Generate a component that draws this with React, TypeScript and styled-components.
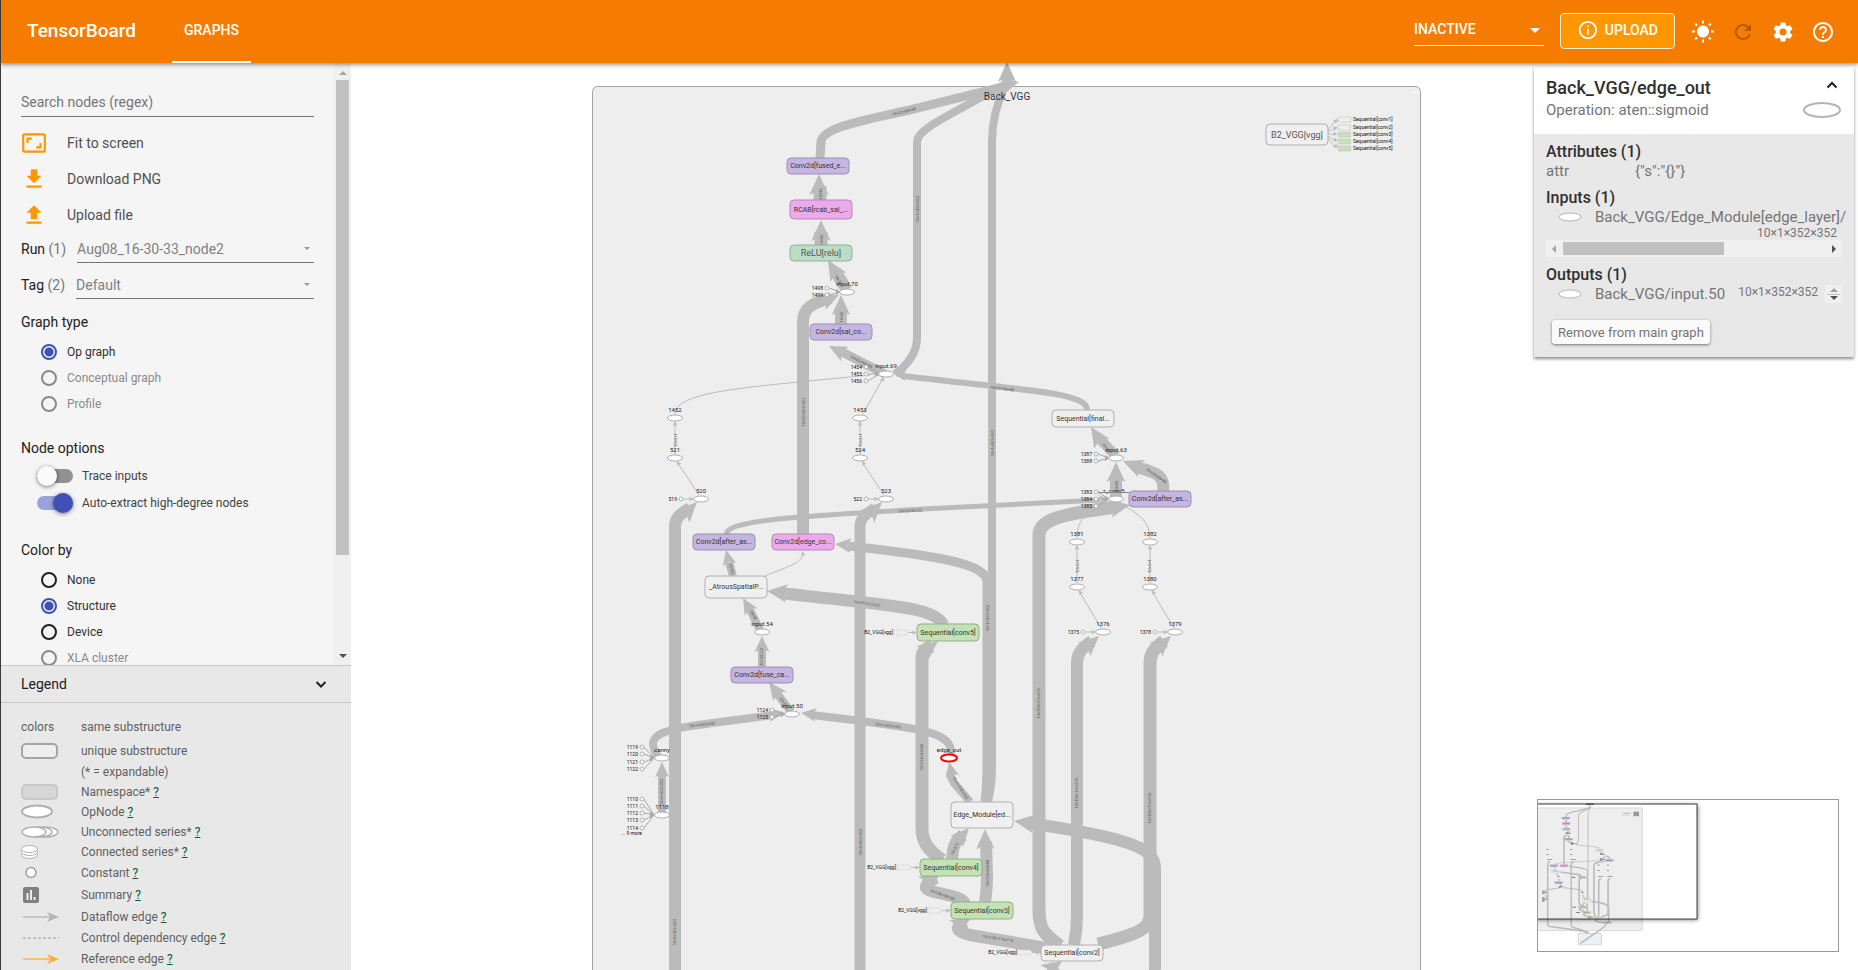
import React from 'react';
import styled, { createGlobalStyle } from 'styled-components';
import {
  MdAspectRatio,
  MdFileDownload,
  MdHelpOutline,
  MdInfoOutline,
  MdRefresh,
  MdSettings,
  MdWbSunny,
} from 'react-icons/md';

const GlobalStyle = createGlobalStyle`
  * { box-sizing: border-box; }
  body { margin: 0; font-family: Roboto, "Noto Sans", sans-serif; font-size: 14px; color: #212121; background: #fff; }
  button, input, select { font: inherit; color: inherit; }
`;

/* ---------- page frame ---------- */

const Page = styled.div`
  display: flex;
  flex-direction: column;
  height: 100vh;
  border-left: 1px solid #3a3a3a;
  overflow: hidden;
`;

const Body = styled.div`
  display: flex;
  flex: 1;
  min-height: 0;
`;

/* ---------- header ---------- */

const Header = styled.header`
  position: relative;
  z-index: 5;
  display: flex;
  align-items: center;
  height: 63px;
  flex: none;
  padding: 0 23px 0 26px;
  background: #f57c00;
  color: #fff;
  box-shadow: 0 2px 4px rgba(0, 0, 0, 0.4);
`;

const Brand = styled.h1`
  margin: 0 36px 0 0;
  padding-bottom: 2px;
  font-size: 19px;
  font-weight: 500;
  line-height: 24px;
`;

const Tabs = styled.nav`
  display: flex;
  flex: 1;
  align-self: stretch;
`;

const Tab = styled.button`
  padding: 0 12px 2px;
  border: 0;
  border-bottom: 2px solid #fff;
  background: none;
  font-weight: 500;
`;

const StatusSelect = styled.div`
  position: relative;
  display: flex;
  width: 130px;
  height: 30px;
  margin: 0 16px 2px 0;
  padding-bottom: 2px;
  border-bottom: 1px solid #fff;
  font-weight: 500;
`;

const UploadButton = styled.button`
  display: flex;
  align-items: center;
  gap: 6px;
  width: 115px;
  height: 36px;
  margin: 0 16px 2px 0;
  padding: 0 16px 2px;
  border: 1px solid #fff0d8;
  border-radius: 4px;
  background: #ff9800;
  font-weight: 500;
`;

const IconBar = styled.div`
  display: flex;
  gap: 16px;
`;

const IconButton = styled.button<{ $dim?: boolean }>`
  display: flex;
  width: 24px;
  height: 24px;
  padding: 0;
  border: 0;
  background: none;
  color: ${(p) => (p.$dim ? '#b45b00' : '#fff')};
`;

const Caret = styled.span<{ $color: string; $size: number; $dir?: 'up' | 'down' | 'left' | 'right' }>`
  width: 0;
  height: 0;
  pointer-events: none;
  border: ${(p) => p.$size}px solid transparent;
  ${(p) => {
    const side = { up: 'bottom', down: 'top', left: 'right', right: 'left' }[p.$dir ?? 'down'];
    const opposite = { up: 'top', down: 'bottom', left: 'left', right: 'right' }[p.$dir ?? 'down'];
    return `border-${side}-color: ${p.$color}; border-${opposite}-width: 0;`;
  }}
`;

const BareSelect = styled.select`
  flex: 1;
  min-width: 0;
  padding: 0;
  border: 0;
  outline: 0;
  appearance: none;
  background: none;
  option { color: #212121; }
`;

const CaretSlot = styled.span<{ $right: number }>`
  position: absolute;
  right: ${(p) => p.$right}px;
  top: 0;
  bottom: 0;
  display: flex;
  align-items: center;
  pointer-events: none;
`;

/* ---------- sidebar ---------- */

const Sidebar = styled.aside`
  display: flex;
  flex-direction: column;
  width: 350px;
  flex: none;
  background: #f5f5f5;
`;

const ControlsScroller = styled.div`
  display: flex;
  flex: 1;
  min-height: 0;
  overflow: hidden;
`;

const Controls = styled.div`
  flex: 1;
  min-width: 0;
  padding: 25px 20px 0;
`;

const SearchInput = styled.input`
  display: block;
  width: 100%;
  height: 29px;
  margin-bottom: 8px;
  padding: 0;
  border: 0;
  border-bottom: 1px solid #757575;
  outline: 0;
  background: none;
  &::placeholder { color: #757575; opacity: 1; }
`;

const ActionButton = styled.button`
  display: flex;
  align-items: center;
  gap: 20px;
  width: 100%;
  height: 36px;
  padding: 0;
  border: 0;
  background: none;
  color: #505050;
  text-align: left;
  svg { color: #ff9800; }
`;

const PickRow = styled.div`
  display: flex;
  align-items: flex-end;
  gap: 11px;
  height: 30px;
  margin-bottom: 6px;
  line-height: 28px;
  color: #212121;
`;

const Count = styled.span`
  color: #757575;
`;

const PickBox = styled.div`
  position: relative;
  display: flex;
  flex: 1;
  height: 28px;
  border-bottom: 1px solid #757575;
  color: #808080;
`;

const SectionTitle = styled.h2<{ $gap: number }>`
  margin: ${(p) => p.$gap}px 0 0;
  font-size: 14px;
  font-weight: 400;
  line-height: 20px;
`;

const OptionList = styled.div`
  padding: 7px 0 0 20px;
`;

const OptionLabel = styled.label<{ $off?: boolean }>`
  display: flex;
  align-items: center;
  gap: 10px;
  height: 26px;
  font-size: 12px;
  color: ${(p) => (p.$off ? '#8a8a8a' : '#303030')};
`;

const Radio = styled.input`
  width: 16px;
  height: 16px;
  margin: 0;
  appearance: none;
  border: 2px solid #212121;
  border-radius: 50%;
  &:disabled { border-color: #8a8a8a; }
  &:checked {
    border-color: #3f51b5;
    background: radial-gradient(circle, #3f51b5 4px, transparent 5px);
  }
`;

const SwitchList = styled.div`
  padding: 4px 0 0 16px;
`;

const SwitchLabel = styled.label`
  display: flex;
  align-items: center;
  gap: 9px;
  height: 27px;
  font-size: 12px;
  color: #424242;
`;

const Switch = styled.input`
  position: relative;
  width: 36px;
  height: 14px;
  margin: 0;
  appearance: none;
  border-radius: 7px;
  background: #919191;
  &::before {
    content: '';
    position: absolute;
    top: -3px;
    left: 0;
    width: 20px;
    height: 20px;
    border-radius: 50%;
    background: #fafafa;
    box-shadow: 0 1px 4px rgba(0, 0, 0, 0.5);
  }
  &:checked { background: #9aa4da; }
  &:checked::before { left: 16px; background: #3f51b5; }
`;

const VerticalTrack = styled.div`
  display: flex;
  flex-direction: column;
  align-items: center;
  width: 17px;
  padding: 8px 0 7px;
  background: #f0f0f0;
`;

const VerticalThumb = styled.div`
  width: 13px;
  height: 475px;
  margin: 5px 0 auto;
  background: #c1c1c1;
`;

const Legend = styled.section`
  flex: none;
  background: #e8e8e8;
`;

const LegendHeader = styled.button`
  display: flex;
  align-items: center;
  justify-content: space-between;
  width: 100%;
  height: 38px;
  padding: 0 24px 0 20px;
  border: 0;
  border-top: 1px solid #c8c8c8;
  border-bottom: 1px solid #c8c8c8;
  background: none;
`;

const LegendList = styled.ul`
  margin: 0;
  padding: 11px 20px 1px;
  list-style: none;
  font-size: 12px;
  color: #5f5f5f;
`;

const LegendRow = styled.li<{ $h: number }>`
  display: flex;
  align-items: center;
  height: ${(p) => p.$h}px;
`;

const LegendKey = styled.span`
  display: flex;
  align-items: center;
  width: 60px;
  flex: none;
`;

const HelpLink = styled.a`
  margin-left: 3px;
  color: #0b5a2a;
`;

/* ---------- canvas ---------- */

const Canvas = styled.main`
  position: relative;
  flex: 1;
  min-width: 0;
  overflow: hidden;
  background: #fff;
`;

const GraphSvg = styled.svg`
  display: block;
  width: 100%;
  height: 100%;
`;

const Minimap = styled.div`
  position: absolute;
  right: 19px;
  bottom: 18px;
  width: 302px;
  height: 153px;
  border: 1px solid #999;
  background: #fff;
`;

const InfoPanel = styled.section`
  position: absolute;
  top: 4px;
  right: 4px;
  width: 320px;
  background: #e8e8e8;
  box-shadow: 0 2px 3px rgba(0, 0, 0, 0.45);
  font-size: 15px;
  color: #757575;
`;

const InfoHead = styled.div`
  display: flex;
  justify-content: space-between;
  height: 67px;
  padding: 9px 12px 0;
  background: #fff;
`;

const InfoTitle = styled.h2`
  margin: 0;
  font-size: 18px;
  font-weight: 500;
  line-height: 24px;
  color: #303030;
`;

const InfoSub = styled.div`
  font-size: 15px;
  line-height: 20px;
`;

const InfoIcons = styled.div`
  display: flex;
  flex-direction: column;
  align-items: flex-end;
  gap: 10px;
`;

const CollapseButton = styled.button`
  display: flex;
  margin: 3px 4px 0;
  padding: 0;
  border: 0;
  background: none;
`;

const InfoBody = styled.div`
  padding: 8px 12px 13px;
`;

const InfoHeading = styled.h3`
  margin: 0;
  font-size: 16px;
  font-weight: 500;
  line-height: 20px;
  color: #303030;
`;

const AttrRow = styled.div`
  display: flex;
  height: 26px;
  line-height: 18px;
`;

const AttrName = styled.span`
  width: 89px;
`;

const IoRow = styled.div`
  display: flex;
  align-items: center;
  height: 18px;
  gap: 13px;
  padding-left: 12px;
  white-space: nowrap;
  svg { flex: none; }
`;

const Shape = styled.div`
  padding-right: 5px;
  font-size: 12px;
  line-height: 14px;
  text-align: right;
`;

const InlineShape = styled.span`
  flex: 1;
  font-size: 12px;
  line-height: 14px;
  padding-bottom: 4px;
`;

const HorizontalTrack = styled.div`
  display: flex;
  align-items: center;
  height: 17px;
  margin-bottom: 8px;
  padding: 0 6px;
  background: #f0f0f0;
`;

const HorizontalThumb = styled.div`
  width: 161px;
  height: 13px;
  margin: 0 auto 0 7px;
  background: #c1c1c1;
`;

const StepTrack = styled.span`
  display: flex;
  flex-direction: column;
  align-items: center;
  justify-content: space-between;
  flex: none;
  width: 17px;
  height: 18px;
  margin-left: -9px;
  padding: 3px 0;
  background: #f0f0f0;
`;

const StepLine = styled.span`
  width: 13px;
  height: 1px;
  background: #c1c1c1;
`;

const RemoveButton = styled.button`
  display: block;
  height: 24px;
  margin: 17px 0 0 6px;
  padding: 0 6px;
  border: 0;
  border-radius: 3px;
  background: #fafafa;
  box-shadow: 0 1px 3px rgba(0, 0, 0, 0.5);
  font-size: 13px;
`;

/* ---------- graph data ---------- */

const EDGE = '#bbb';

type Head = [x: number, y: number, angle: number, size: number];
interface Edge {
  d: string;
  w: number;
  head?: Head;
}

const edges: Edge[] = [
  { d: 'M820 158 L821 142 C822 128 860 121 905 111 L1006 86', w: 9, head: [1019, 82, -14, 17] },
  { d: 'M895 374 C910 363 917 352 917 338 L917 142 C917 130 940 120 1004 85', w: 8 },
  { d: 'M988 802 C992 785 992 775 992 760 L992 142 C992 115 1000 96 1006 84', w: 8 },
  { d: 'M1007 86 L1007 76', w: 10, head: [1007, 62, -90, 20] },
  { d: 'M985 802 C987 785 987 775 987 760 L987 582 C987 564 940 556 848 546', w: 9, head: [835, 544, 186, 16] },
  { d: 'M820 200 L820 186', w: 13, head: [819, 174, -90, 21] },
  { d: 'M821 245 L821 232', w: 13, head: [821, 220, -90, 21] },
  { d: 'M847 290 L835 271', w: 12, head: [828, 260, -121, 20] },
  { d: 'M841 324 L841 308', w: 12, head: [841, 295, -90, 20] },
  { d: 'M803 535 L803 322 C803 308 812 303 831 298', w: 12, head: [839, 295, -23, 18] },
  { d: 'M885 374 L842 352', w: 9, head: [829, 346, 207, 18] },
  { d: 'M1087 410 C1088 392 1020 390 903 376', w: 6, head: [894, 374, 187, 12] },
  { d: 'M726 535 C726 520 790 517 923 509 L1100 500', w: 5, head: [1109, 499, -4, 10] },
  { d: 'M675 1014 L675 527 C675 518 679 515 690 508', w: 12, head: [697, 502, -45, 20] },
  { d: 'M860 1014 L860 527 C860 518 865 515 875 508', w: 11, head: [882, 502, -45, 20] },
  { d: 'M733 576 L729 562', w: 8, head: [726, 550, -104, 15] },
  { d: 'M943 625 C936 606 880 605 781 593', w: 12, head: [767, 591, 187, 20] },
  { d: 'M760 630 L749 608', w: 8, head: [743, 598, -120, 16] },
  { d: 'M762 667 L762 648', w: 8, head: [762, 636, -90, 16] },
  { d: 'M791 712 L776 692', w: 8, head: [769, 682, -127, 18] },
  { d: 'M658 757 C640 728 670 729 773 715', w: 8, head: [784, 713, -7, 15] },
  { d: 'M951 754 C953 730 915 728 812 715', w: 8, head: [801, 713, 187, 15] },
  { d: 'M662 812 L662 774', w: 8, head: [662, 762, -90, 15] },
  { d: 'M970 802 C958 786 952 785 950 772', w: 8, head: [949, 762, -103, 15] },
  { d: 'M952 859 C953 845 956 840 963 835', w: 12, head: [969, 828, -48, 18] },
  { d: 'M985 902 C987 890 987 885 987 875 L986 842', w: 12, head: [985, 829, -91, 20] },
  { d: 'M965 904 C962 894 930 894 926 888 C925 883 932 880 936 878', w: 12, head: [940, 875, -28, 20] },
  { d: 'M942 860 C928 850 922 842 922 828 L922 657 C922 652 926 648 932 646', w: 13, head: [938, 641, -38, 20] },
  { d: 'M1046 948 L970 935 C954 931 955 926 966 922', w: 12, head: [971, 918, -30, 20] },
  { d: 'M1060 946 C1045 935 1039 930 1039 910 L1039 535 C1039 520 1060 514 1117 507', w: 13, head: [1130, 505, -10, 20] },
  { d: 'M1074 945 C1077 930 1077 925 1077 915 L1077 663 C1077 653 1082 648 1092 641', w: 12, head: [1099, 636, -42, 20] },
  { d: 'M1098 944 C1140 934 1150 928 1150 915 L1150 663 C1150 653 1155 648 1164 641', w: 13, head: [1171, 636, -42, 20] },
  { d: 'M1150 988 C1155 980 1155 975 1155 965 L1155 868 C1155 848 1130 838 1028 823', w: 12, head: [1014, 821, 188, 20] },
  { d: 'M1120 990 C1060 985 1046 976 1056 966', w: 12, head: [1062, 961, -35, 20] },
  { d: 'M1116 456 L1098 437', w: 10, head: [1091, 427, -123, 20] },
  { d: 'M1116 498 L1116 476', w: 12, head: [1116, 462, -90, 20] },
  { d: 'M1163 492 C1166 473 1152 472 1136 467', w: 12, head: [1123, 461, 202, 20] },
  { d: 'M675 1014 C680 1028 880 1030 1000 1070', w: 12 },
  { d: 'M860 1014 C862 1028 940 1040 1000 1070', w: 11 },
  { d: 'M1140 995 C1130 1030 1060 1060 930 1155', w: 12 },
];

const thinEdges: Edge[] = [
  { d: 'M675 414 C677 391 740 388 870 375', w: 1 },
  { d: 'M863 414 L883 378', w: 1, head: [884, 377, -61, 5] },
  { d: 'M675 454 L675 422', w: 1, head: [675, 421, -90, 5] },
  { d: 'M860 454 L860 422', w: 1, head: [860, 421, -90, 5] },
  { d: 'M699 495 L677 462', w: 1, head: [677, 461, -123, 5] },
  { d: 'M884 495 L862 462', w: 1, head: [862, 461, -123, 5] },
  { d: 'M683 499 L692 499', w: 1, head: [694, 499, 0, 5] },
  { d: 'M868 499 L877 499', w: 1, head: [879, 499, 0, 5] },
  { d: 'M765 576 C785 567 803 564 803 553', w: 1, head: [803, 551, -90, 5] },
  { d: 'M1077 538 C1077 515 1090 512 1118 503', w: 1 },
  { d: 'M1150 538 C1150 520 1135 512 1120 503', w: 1 },
  { d: 'M1077 583 L1077 546', w: 1, head: [1077, 545, -90, 5] },
  { d: 'M1150 583 L1150 546', w: 1, head: [1150, 545, -90, 5] },
  { d: 'M1101 628 L1079 591', w: 1, head: [1079, 590, -120, 5] },
  { d: 'M1174 628 L1152 591', w: 1, head: [1152, 590, -120, 5] },
  { d: 'M1086 632 L1094 632', w: 1, head: [1096, 632, 0, 5] },
  { d: 'M1158 632 L1166 632', w: 1, head: [1168, 632, 0, 5] },
];

interface BoxNode {
  x: number;
  y: number;
  h: number;
  label: string;
  fill: string;
  stroke: string;
  big?: boolean;
}

const PURPLE = { fill: '#c5b5e1', stroke: '#9c8fb5' };
const PINK = { fill: '#ebaaea', stroke: '#b986b9' };
const MINT = { fill: '#bbddc6', stroke: '#93b09c' };
const GREEN = { fill: '#c5e2b5', stroke: '#94ad86' };
const PLAIN = { fill: '#f0f0f0', stroke: '#b0b0b0' };

const boxes: BoxNode[] = [
  { x: 787, y: 158, h: 16, label: 'Conv2d[fused_e...', ...PURPLE },
  { x: 790, y: 200, h: 19, label: 'RCAB[rcab_sal_...', ...PINK },
  { x: 790, y: 245, h: 16, label: 'ReLU[relu]', big: true, ...MINT },
  { x: 810, y: 324, h: 16, label: 'Conv2d[sal_co...', ...PURPLE },
  { x: 693, y: 534, h: 16, label: 'Conv2d[after_as...', ...PURPLE },
  { x: 772, y: 534, h: 16, label: 'Conv2d[edge_co...', ...PINK },
  { x: 705, y: 576, h: 22, label: '_AtrousSpatialP...', ...PLAIN },
  { x: 917, y: 624, h: 17, label: 'Sequential[conv5]', ...GREEN },
  { x: 731, y: 667, h: 16, label: 'Conv2d[fuse_ca...', ...PURPLE },
  { x: 951, y: 802, h: 26, label: 'Edge_Module[ed...', ...PLAIN },
  { x: 920, y: 859, h: 17, label: 'Sequential[conv4]', ...GREEN },
  { x: 951, y: 902, h: 17, label: 'Sequential[conv3]', ...GREEN },
  { x: 1041, y: 945, h: 16, label: 'Sequential[conv2]', ...PLAIN },
  { x: 1052, y: 410, h: 17, label: 'Sequential[final...', ...PLAIN },
  { x: 1129, y: 491, h: 16, label: 'Conv2d[after_as...', ...PURPLE },
  { x: 1266, y: 124, h: 21, label: 'B2_VGG[vgg]', big: true, ...PLAIN },
];

interface OpNode {
  x: number;
  y: number;
  label: string;
  selected?: boolean;
}

const ops: OpNode[] = [
  { x: 847, y: 292, label: 'input.70' },
  { x: 886, y: 374, label: 'input.69' },
  { x: 675, y: 418, label: '1452' },
  { x: 675, y: 458, label: '521' },
  { x: 701, y: 499, label: '520' },
  { x: 860, y: 418, label: '1453' },
  { x: 860, y: 458, label: '524' },
  { x: 886, y: 499, label: '523' },
  { x: 762, y: 632, label: 'input.54' },
  { x: 792, y: 714, label: 'input.50' },
  { x: 662, y: 758, label: 'canny' },
  { x: 662, y: 815, label: '1118' },
  { x: 949, y: 758, label: 'edge_out', selected: true },
  { x: 1116, y: 458, label: 'input.63' },
  { x: 1116, y: 499, label: 'z_conv5...' },
  { x: 1077, y: 542, label: '1381' },
  { x: 1077, y: 587, label: '1377' },
  { x: 1103, y: 632, label: '1376' },
  { x: 1150, y: 542, label: '1382' },
  { x: 1150, y: 587, label: '1380' },
  { x: 1175, y: 632, label: '1379' },
];

interface Constant {
  x: number;
  y: number;
  label: string;
  to?: [number, number];
}

const constants: Constant[] = [
  { x: 827, y: 288, label: '1498', to: [840, 292] },
  { x: 827, y: 295, label: '1499', to: [840, 292] },
  { x: 866, y: 367, label: '1454', to: [879, 374] },
  { x: 866, y: 374, label: '1455', to: [879, 374] },
  { x: 866, y: 381, label: '1456', to: [879, 374] },
  { x: 681, y: 499, label: '519' },
  { x: 866, y: 499, label: '522' },
  { x: 772, y: 710, label: '1124', to: [785, 714] },
  { x: 772, y: 717, label: '1125', to: [785, 714] },
  { x: 642, y: 747, label: '1119', to: [654, 758] },
  { x: 642, y: 754, label: '1120', to: [654, 758] },
  { x: 642, y: 762, label: '1121', to: [654, 758] },
  { x: 642, y: 769, label: '1122', to: [654, 758] },
  { x: 642, y: 799, label: '1110', to: [654, 815] },
  { x: 642, y: 806, label: '1111', to: [654, 815] },
  { x: 642, y: 813, label: '1112', to: [654, 815] },
  { x: 642, y: 820, label: '1113', to: [654, 815] },
  { x: 642, y: 828, label: '1114', to: [654, 815] },
  { x: 1096, y: 454, label: '1387', to: [1109, 458] },
  { x: 1096, y: 461, label: '1388', to: [1109, 458] },
  { x: 1096, y: 492, label: '1383', to: [1109, 499] },
  { x: 1096, y: 499, label: '1384', to: [1109, 499] },
  { x: 1096, y: 506, label: '1385', to: [1109, 499] },
  { x: 1083, y: 632, label: '1375' },
  { x: 1155, y: 632, label: '1378' },
];

const refInputs: [number, number][] = [
  [894, 632],
  [897, 867],
  [928, 910],
  [1018, 952],
];

const refOutputs: [number, string, string][] = [
  [119, 'Sequential[conv1]', '#eee'],
  [127, 'Sequential[conv2]', '#eee'],
  [134, 'Sequential[conv3]', '#c5e2b5'],
  [141, 'Sequential[conv4]', '#c5e2b5'],
  [148, 'Sequential[conv5]', '#c5e2b5'],
];

const shapeLabels: [number, number, number, string][] = [
  [904, 112, -14, '10×32×88×88'],
  [918, 209, -90, '10×1×352×352'],
  [804, 412, -90, '10×32×352×352'],
  [993, 443, -90, '10×1×352×352'],
  [988, 618, -90, '10×1×352×352'],
  [821, 194, -90, '10×32'],
  [822, 240, -90, '10×32'],
  [838, 280, 59, '10×32'],
  [842, 317, -90, '10×32'],
  [861, 362, 27, '10×32×88×88'],
  [1002, 389, 7, '10×32×88×88'],
  [910, 511, -3, '10×32×22×22'],
  [676, 440, -90, '10×2×1'],
  [861, 440, -90, '10×2×1'],
  [702, 725, -7, '10×1×352×352'],
  [888, 726, 7, '10×1×352×352'],
  [662, 792, -90, '10×1×352×352'],
  [922, 757, -90, '10×256×44×44'],
  [960, 788, 57, '10×1×352×352'],
  [955, 849, -65, '10×512'],
  [988, 873, -90, '10×256×88×88'],
  [942, 895, 20, '10×256×88×88'],
  [998, 939, 8, '10×128×176×176'],
  [675, 932, -90, '10×3×352×352'],
  [861, 842, -90, '10×3×352×352'],
  [1039, 703, -90, '10×128×176×176'],
  [1077, 793, -90, '10×128×176×176'],
  [1150, 808, -90, '10×128×176×176'],
  [1117, 486, -90, '10×32'],
  [1156, 476, 35, '10×32×88×88'],
  [1106, 448, 50, '10×32'],
  [1078, 566, -90, '10×2×1'],
  [1150, 566, -90, '10×2×1'],
  [732, 569, -104, '10×32'],
  [753, 615, 60, '10×32'],
  [762, 657, -90, '10×32×22'],
  [783, 702, 53, '10×32'],
  [867, 604, 8, '10×512×22×22'],
];

function ArrowHead({ head }: { head: Head }) {
  const [x, y, angle, s] = head;
  return (
    <path
      d={`M0 0 L${-s} ${-s * 0.46} L${-s * 0.78} 0 L${-s} ${s * 0.46} Z`}
      transform={`translate(${x} ${y}) rotate(${angle})`}
      fill={EDGE}
    />
  );
}

function Edges({ list }: { list: Edge[] }) {
  return (
    <g fill="none" stroke={EDGE}>
      {list.map((e, i) => (
        <path key={i} d={e.d} strokeWidth={e.w} />
      ))}
      <g stroke="none">{list.map((e, i) => e.head && <ArrowHead key={i} head={e.head} />)}</g>
    </g>
  );
}

function Graph() {
  return (
    <g fontFamily="Roboto, sans-serif">
      <rect x="592.5" y="86.5" width="828" height="966" rx="5" fill="#eee" stroke="#a3a3a3" />
      <path d="M1412 92.5h5" stroke="#fff" />
      <Edges list={edges} />
      <Edges list={thinEdges} />
      <g fontSize="4" fill="#555" textAnchor="middle">
        {shapeLabels.map(([x, y, a, t], i) => (
          <text key={i} transform={`translate(${x} ${y}) rotate(${a})`} y="1">
            {t}
          </text>
        ))}
      </g>
      {boxes.map((b, i) => (
        <g key={i}>
          <rect x={b.x} y={b.y} width="62" height={b.h} rx="4" fill={b.fill} stroke={b.stroke} />
          <text
            x={b.x + 31}
            y={b.y + b.h / 2 + (b.big ? 3 : 2)}
            fontSize={b.big ? 9 : 7}
            fill={b.big ? '#555' : '#333'}
            textAnchor="middle"
          >
            {b.label}
          </text>
        </g>
      ))}
      {constants.map((c, i) => (
        <g key={i}>
          {c.to && <path d={`M${c.x + 2} ${c.y}L${c.to[0]} ${c.to[1]}`} stroke="#aaa" />}
          {c.to && <path d={`M${c.to[0]} ${c.to[1]}l-4 -3v6z`} fill="#aaa" />}
          <circle cx={c.x} cy={c.y} r="2" fill="#fff" stroke="#b0b0b0" />
          <text x={c.x - 4} y={c.y + 2} fontSize="5" fill="#111" textAnchor="end">
            {c.label}
          </text>
        </g>
      ))}
      <text x="642" y="835" fontSize="5" fill="#111" textAnchor="end">
        ... 9 more
      </text>
      {ops.map((o, i) => (
        <g key={i}>
          <ellipse
            cx={o.x}
            cy={o.y}
            rx={o.selected ? 8 : 7.5}
            ry={o.selected ? 3.5 : 3}
            fill="#fff"
            stroke={o.selected ? '#f00' : '#b0b0b0'}
            strokeWidth={o.selected ? 2 : 1}
          />
          <text x={o.x} y={o.y - 6} fontSize="6" fill="#222" textAnchor="middle">
            {o.label}
          </text>
        </g>
      ))}
      <path d="M1098 492.500h31" stroke="#888" />
      {refInputs.map(([x, y], i) => (
        <g key={i}>
          <text x={x - 1} y={y + 2} fontSize="5" fill="#111" textAnchor="end">
            B2_VGG[vgg]
          </text>
          <rect x={x} y={y - 2} width="13" height="5" fill="#eee" stroke="#ccc" strokeDasharray="1 1" />
          <path d={`M${x + 14} ${y + 0.5}h6`} stroke={EDGE} />
          <ArrowHead head={[x + 23, y + 0.5, 0, 5]} />
        </g>
      ))}
      {refOutputs.map(([y, label, fill], i) => (
        <g key={i}>
          <path d={`M1328 ${130 + i * 2}L1336 ${y + 0.5}`} stroke={EDGE} />
          <ArrowHead head={[1338, y, (i - 2) * 22, 5]} />
          <rect x="1338.5" y={y - 2} width="12" height="5" fill={fill} stroke="#bbb" strokeDasharray="1 1" />
          <text x="1353" y={y + 2} fontSize="5" fill="#111">
            {label}
          </text>
        </g>
      ))}
      <text x="1007" y="100" fontSize="10" fill="#333" textAnchor="middle">
        Back_VGG
      </text>
    </g>
  );
}

/* The overview repeats the graph without its texts; each label becomes a short bar. */
function GraphOverview() {
  return (
    <g>
      <rect x="592" y="86" width="828" height="966" rx="5" fill="#eee" stroke="#d0d0d0" strokeWidth="6" />
      <rect x="915" y="1075" width="182" height="88" rx="6" fill="#ecf1f5" stroke="#d5d8da" strokeWidth="8" />
      <Edges list={edges} />
      {boxes.map((b, i) => (
        <g key={i}>
          <rect x={b.x} y={b.y} width="62" height={b.h} fill={b.fill} stroke={b.stroke} strokeWidth="2" />
          <rect x={b.x + 8} y={b.y + 5} width="46" height="6" fill="#666" opacity="0.5" />
        </g>
      ))}
      {[...ops, ...constants].map((o, i) => (
        <g key={i}>
          <ellipse cx={o.x} cy={o.y} rx="7" ry="3" fill="#fff" />
          <rect x={o.x - 10} y={o.y - 9} width="18" height="5" fill="#666" />
        </g>
      ))}
      {refInputs.map(([x, y], i) => (
        <rect key={i} x={x - 28} y={y - 3} width="28" height="6" fill="#555" />
      ))}
      <rect x="1350" y="115" width="44" height="36" fill="#999" />
      <rect x="975" y="50" width="62" height="14" fill="#777c9a" />
      <rect x="1114" y="983" width="62" height="12" fill="#aaa" />
    </g>
  );
}

/* ---------- small icons ---------- */

function Chevron({ up }: { up?: boolean }) {
  return (
    <svg width="12" height="12" viewBox="0 0 12 12" fill="none" stroke="#212121" strokeWidth="2" aria-hidden="true">
      <path d={up ? 'M1.5 8.5L6 4l4.5 4.5' : 'M1.5 4L6 8.5L10.5 4'} />
    </svg>
  );
}

function OpIcon({ width, height, stroke = 1 }: { width: number; height: number; stroke?: number }) {
  return (
    <svg width={width} height={height} aria-hidden="true">
      <ellipse
        cx={width / 2}
        cy={height / 2}
        rx={width / 2 - stroke}
        ry={height / 2 - stroke}
        fill="#fff"
        stroke="#b5b5b5"
        strokeWidth={stroke}
      />
    </svg>
  );
}

function UploadGlyph() {
  return (
    <svg width="26" height="26" viewBox="0 0 24 24" fill="currentColor" aria-hidden="true">
      <path d="M9 16h6v-6h4l-7-7-7 7h4zM5 18h14v2H5z" />
    </svg>
  );
}

const legendIcons: Record<string, React.ReactNode> = {
  unique: <rect x="1" y="1" width="35" height="14" rx="4" fill="#eee" stroke="#a5a5a5" strokeWidth="2" />,
  namespace: <rect x="1" y="1" width="35" height="14" rx="4" fill="#d6d6d6" stroke="#c8c8c8" strokeWidth="2" />,
  op: <ellipse cx="16" cy="7.5" rx="15" ry="6" fill="#fff" stroke="#b0b0b0" strokeWidth="2" />,
  unconnected: (
    <g fill="#fff" stroke="#b0b0b0" strokeWidth="1.5">
      <ellipse cx="25" cy="8" rx="12" ry="5" />
      <ellipse cx="19" cy="8" rx="12" ry="5" />
      <ellipse cx="13" cy="8" rx="12" ry="5" />
    </g>
  ),
  connected: (
    <g fill="#fff" stroke="#b0b0b0">
      <ellipse cx="8.5" cy="11" rx="8" ry="3.5" />
      <ellipse cx="8.5" cy="8" rx="8" ry="3.5" />
      <ellipse cx="8.5" cy="5" rx="8" ry="3.5" />
    </g>
  ),
  constant: <circle cx="10" cy="7.5" r="5" fill="#fff" stroke="#a0a0a0" strokeWidth="1.5" />,
  summary: (
    <g>
      <rect x="2" width="16" height="16" rx="2" fill="#808080" />
      <path d="M6.500 6v7M10 3v10M13.500 10v3" stroke="#eee" strokeWidth="2" />
    </g>
  ),
  dataflow: (
    <g>
      <path d="M2 8h28" stroke="#bbb" strokeWidth="1.500" />
      <path d="M38 8l-12 -5l3 5l-3 5z" fill="#b5b5b5" />
    </g>
  ),
  control: <path d="M2 8h36" stroke="#b5b5b5" strokeWidth="1.500" strokeDasharray="3 2" />,
  reference: (
    <g>
      <path d="M2 8h28" stroke="#ffb74d" strokeWidth="1.500" />
      <path d="M38 8l-12 -5l3 5l-3 5z" fill="#ffb03a" />
    </g>
  ),
};

const legendRows: { h: number; text: string; icon?: string; help?: boolean }[] = [
  { h: 22, text: 'unique substructure', icon: 'unique' },
  { h: 20, text: '(* = expandable)' },
  { h: 20, text: 'Namespace*', icon: 'namespace', help: true },
  { h: 20, text: 'OpNode', icon: 'op', help: true },
  { h: 20, text: 'Unconnected series*', icon: 'unconnected', help: true },
  { h: 20, text: 'Connected series*', icon: 'connected', help: true },
  { h: 22, text: 'Constant', icon: 'constant', help: true },
  { h: 22, text: 'Summary', icon: 'summary', help: true },
  { h: 21, text: 'Dataflow edge', icon: 'dataflow', help: true },
  { h: 21, text: 'Control dependency edge', icon: 'control', help: true },
  { h: 21, text: 'Reference edge', icon: 'reference', help: true },
];

/* ---------- composed parts ---------- */

function Picker({ id, label, count, value }: { id: string; label: string; count: number; value: string }) {
  return (
    <PickRow>
      <label htmlFor={id}>
        {label} <Count>({count})</Count>
      </label>
      <PickBox>
        <BareSelect id={id}>
          <option>{value}</option>
        </BareSelect>
        <CaretSlot $right={4}>
          <Caret $size={3} $color="#9a9a9a" />
        </CaretSlot>
      </PickBox>
    </PickRow>
  );
}

function RadioOptions({ name, options, selected, disabled }: { name: string; options: string[]; selected: string; disabled: string[] }) {
  return (
    <OptionList>
      {options.map((o) => (
        <OptionLabel key={o} $off={disabled.includes(o)}>
          <Radio type="radio" name={name} defaultChecked={o === selected} disabled={disabled.includes(o)} />
          {o}
        </OptionLabel>
      ))}
    </OptionList>
  );
}

export default function App() {
  return (
    <Page>
      <GlobalStyle />
      <Header>
        <Brand>TensorBoard</Brand>
        <Tabs>
          <Tab>GRAPHS</Tab>
        </Tabs>
        <StatusSelect>
          <BareSelect aria-label="Inactive dashboards">
            <option>INACTIVE</option>
          </BareSelect>
          <CaretSlot $right={4}>
            <Caret $size={5} $color="#fff" />
          </CaretSlot>
        </StatusSelect>
        <UploadButton>
          <MdInfoOutline size={24} />
          UPLOAD
        </UploadButton>
        <IconBar>
          <IconButton aria-label="Theme">
            <MdWbSunny size={24} />
          </IconButton>
          <IconButton aria-label="Reload" $dim>
            <MdRefresh size={24} />
          </IconButton>
          <IconButton aria-label="Settings">
            <MdSettings size={24} />
          </IconButton>
          <IconButton aria-label="Help">
            <MdHelpOutline size={24} />
          </IconButton>
        </IconBar>
      </Header>
      <Body>
        <Sidebar>
          <ControlsScroller>
            <Controls>
              <SearchInput type="text" aria-label="Search nodes" placeholder="Search nodes (regex)" />
              <ActionButton>
                <MdAspectRatio size={26} />
                Fit to screen
              </ActionButton>
              <ActionButton>
                <MdFileDownload size={26} />
                Download PNG
              </ActionButton>
              <ActionButton>
                <UploadGlyph />
                Upload file
              </ActionButton>
              <Picker id="run" label="Run" count={1} value="Aug08_16-30-33_node2" />
              <Picker id="tag" label="Tag" count={2} value="Default" />
              <SectionTitle $gap={13}>Graph type</SectionTitle>
              <RadioOptions
                name="graph-type"
                options={['Op graph', 'Conceptual graph', 'Profile']}
                selected="Op graph"
                disabled={['Conceptual graph', 'Profile']}
              />
              <SectionTitle $gap={21}>Node options</SectionTitle>
              <SwitchList>
                <SwitchLabel>
                  <Switch type="checkbox" />
                  Trace inputs
                </SwitchLabel>
                <SwitchLabel>
                  <Switch type="checkbox" defaultChecked />
                  Auto-extract high-degree nodes
                </SwitchLabel>
              </SwitchList>
              <SectionTitle $gap={24}>Color by</SectionTitle>
              <RadioOptions
                name="color-by"
                options={['None', 'Structure', 'Device', 'XLA cluster']}
                selected="Structure"
                disabled={['XLA cluster']}
              />
            </Controls>
            <VerticalTrack>
              <Caret $size={4} $color="#a3a3a3" $dir="up" />
              <VerticalThumb />
              <Caret $size={4} $color="#505050" />
            </VerticalTrack>
          </ControlsScroller>
          <Legend>
            <LegendHeader>
              Legend
              <Chevron />
            </LegendHeader>
            <LegendList>
              <LegendRow $h={26}>
                <LegendKey>colors</LegendKey>
                same substructure
              </LegendRow>
              {legendRows.map((row) => (
                <LegendRow key={row.text} $h={row.h}>
                  <LegendKey>
                    {row.icon && (
                      <svg width="40" height="16" aria-hidden="true">
                        {legendIcons[row.icon]}
                      </svg>
                    )}
                  </LegendKey>
                  {row.text}
                  {row.help && <HelpLink href="#help">?</HelpLink>}
                </LegendRow>
              ))}
            </LegendList>
          </Legend>
        </Sidebar>
        <Canvas>
          <GraphSvg viewBox="351 63 1507 907" preserveAspectRatio="xMinYMin meet">
            <Graph />
          </GraphSvg>
          <InfoPanel>
            <InfoHead>
              <div>
                <InfoTitle>Back_VGG/edge_out</InfoTitle>
                <InfoSub>Operation: aten::sigmoid</InfoSub>
              </div>
              <InfoIcons>
                <CollapseButton aria-label="Collapse">
                  <Chevron up />
                </CollapseButton>
                <OpIcon width={40} height={18} stroke={2} />
              </InfoIcons>
            </InfoHead>
            <InfoBody>
              <InfoHeading>Attributes (1)</InfoHeading>
              <AttrRow>
                <AttrName>attr</AttrName>
                <span>{'{"s":"{}"}'}</span>
              </AttrRow>
              <InfoHeading>Inputs (1)</InfoHeading>
              <IoRow>
                <OpIcon width={24} height={10} />
                Back_VGG/Edge_Module[edge_layer]/
              </IoRow>
              <Shape>10×1×352×352</Shape>
              <HorizontalTrack>
                <Caret $size={4} $color="#a3a3a3" $dir="left" />
                <HorizontalThumb />
                <Caret $size={4} $color="#505050" $dir="right" />
              </HorizontalTrack>
              <InfoHeading>Outputs (1)</InfoHeading>
              <IoRow>
                <OpIcon width={24} height={10} />
                Back_VGG/input.50
                <InlineShape>10×1×352×352</InlineShape>
                <StepTrack>
                  <Caret $size={4} $color="#a3a3a3" $dir="up" />
                  <StepLine />
                  <Caret $size={4} $color="#505050" />
                </StepTrack>
              </IoRow>
              <RemoveButton>Remove from main graph</RemoveButton>
            </InfoBody>
          </InfoPanel>
          <Minimap>
            <GraphSvg viewBox="1538 800 300 151">
              <defs>
                <filter id="lens-shadow" x="-10%" y="-10%" width="120%" height="120%">
                  <feDropShadow dx="1" dy="1" stdDeviation="2" floodOpacity="0.5" />
                </filter>
                <clipPath id="lens-outside">
                  <path clipRule="evenodd" d="M1500 780H1860V970H1500ZM1462 804H1697V919H1462Z" />
                </clipPath>
              </defs>
              <g transform="translate(1462 797) scale(0.127)">
                <GraphOverview />
              </g>
              <g clipPath="url(#lens-outside)">
                <rect x="1462" y="804" width="235" height="115" fill="#fff" filter="url(#lens-shadow)" />
              </g>
              <rect x="1462" y="804" width="235" height="115" fill="none" stroke="#3c3c3c" />
            </GraphSvg>
          </Minimap>
        </Canvas>
      </Body>
    </Page>
  );
}
